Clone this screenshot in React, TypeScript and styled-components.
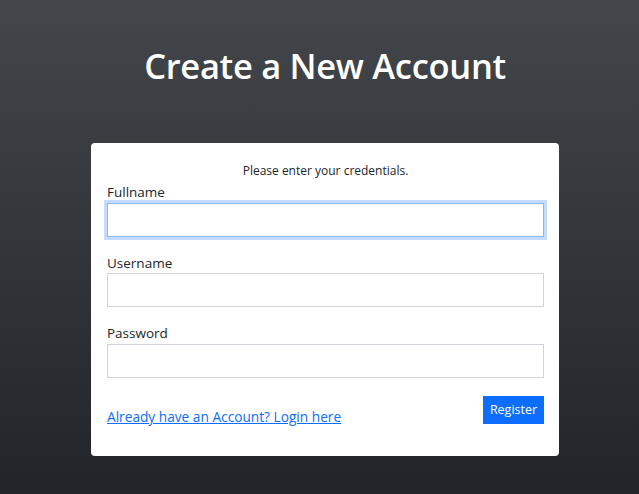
import React from "react";
import styled, { createGlobalStyle } from "styled-components";

const Global = createGlobalStyle`
  html, body { margin: 0; padding: 0; height: 100%; }
  body {
    font-family: "Open Sans", "Noto Sans", sans-serif;
    background: linear-gradient(180deg, #43474b 0%, #212529 100%);
    min-height: 494px;
  }
`;

const Page = styled.div`
  min-height: 494px;
  box-sizing: border-box;
  padding: 38px 0 0 11px;
  display: flex;
  flex-direction: column;
  align-items: center;
`;

const Title = styled.h1`
  margin: 0;
  color: #fff;
  font-size: 34.5px;
  font-weight: 600;
  line-height: 56px;
  letter-spacing: -0.3px;
`;

const Card = styled.form`
  margin-top: 49px;
  width: 468px;
  box-sizing: border-box;
  background: #fff;
  border-radius: 4px;
  padding: 16px 15px 29px 16px;
  display: flex;
  flex-direction: column;
`;

const Note = styled.p`
  margin: 0;
  text-align: center;
  font-size: 12px;
  line-height: 23px;
  color: #212529;
`;

const Group = styled.div`
  display: flex;
  flex-direction: column;
  margin-bottom: 16px;
`;

const Label = styled.label`
  font-size: 13.5px;
  line-height: 20.5px;
  color: #212529;
`;

const Input = styled.input<{ $focused?: boolean }>`
  box-sizing: border-box;
  height: 34px;
  width: 100%;
  border: 1px solid ${(p) => (p.$focused ? "#86b7fe" : "#ced4da")};
  box-shadow: ${(p) => (p.$focused ? "0 0 0 3px rgba(13,110,253,0.25)" : "none")};
  border-radius: 0;
  outline: none;
  padding: 6px 12px;
  font-size: 14px;
  font-family: inherit;
`;

const Footer = styled.div`
  display: flex;
  justify-content: space-between;
  align-items: flex-start;
  margin-top: 2px;
`;

const LoginLink = styled.a`
  margin-top: 11px;
  color: #0d6efd;
  font-size: 13.7px;
  line-height: 20px;
  text-decoration: underline;
  cursor: pointer;
`;

const Button = styled.button`
  background: #0d6efd;
  color: #fff;
  border: none;
  border-radius: 0;
  height: 28px;
  width: 61px;
  padding: 0;
  font-size: 12.5px;
  font-family: inherit;
  cursor: pointer;
`;

export default function App() {
  return (
    <>
      <Global />
      <Page>
        <Title>Create a New Account</Title>
        <Card onSubmit={(e) => e.preventDefault()}>
          <Note>Please enter your credentials.</Note>
          <Group>
            <Label htmlFor="fullname">Fullname</Label>
            <Input id="fullname" $focused />
          </Group>
          <Group>
            <Label htmlFor="username">Username</Label>
            <Input id="username" />
          </Group>
          <Group>
            <Label htmlFor="password">Password</Label>
            <Input id="password" type="password" />
          </Group>
          <Footer>
            <LoginLink>Already have an Account? Login here</LoginLink>
            <Button type="submit">Register</Button>
          </Footer>
        </Card>
      </Page>
    </>
  );
}
